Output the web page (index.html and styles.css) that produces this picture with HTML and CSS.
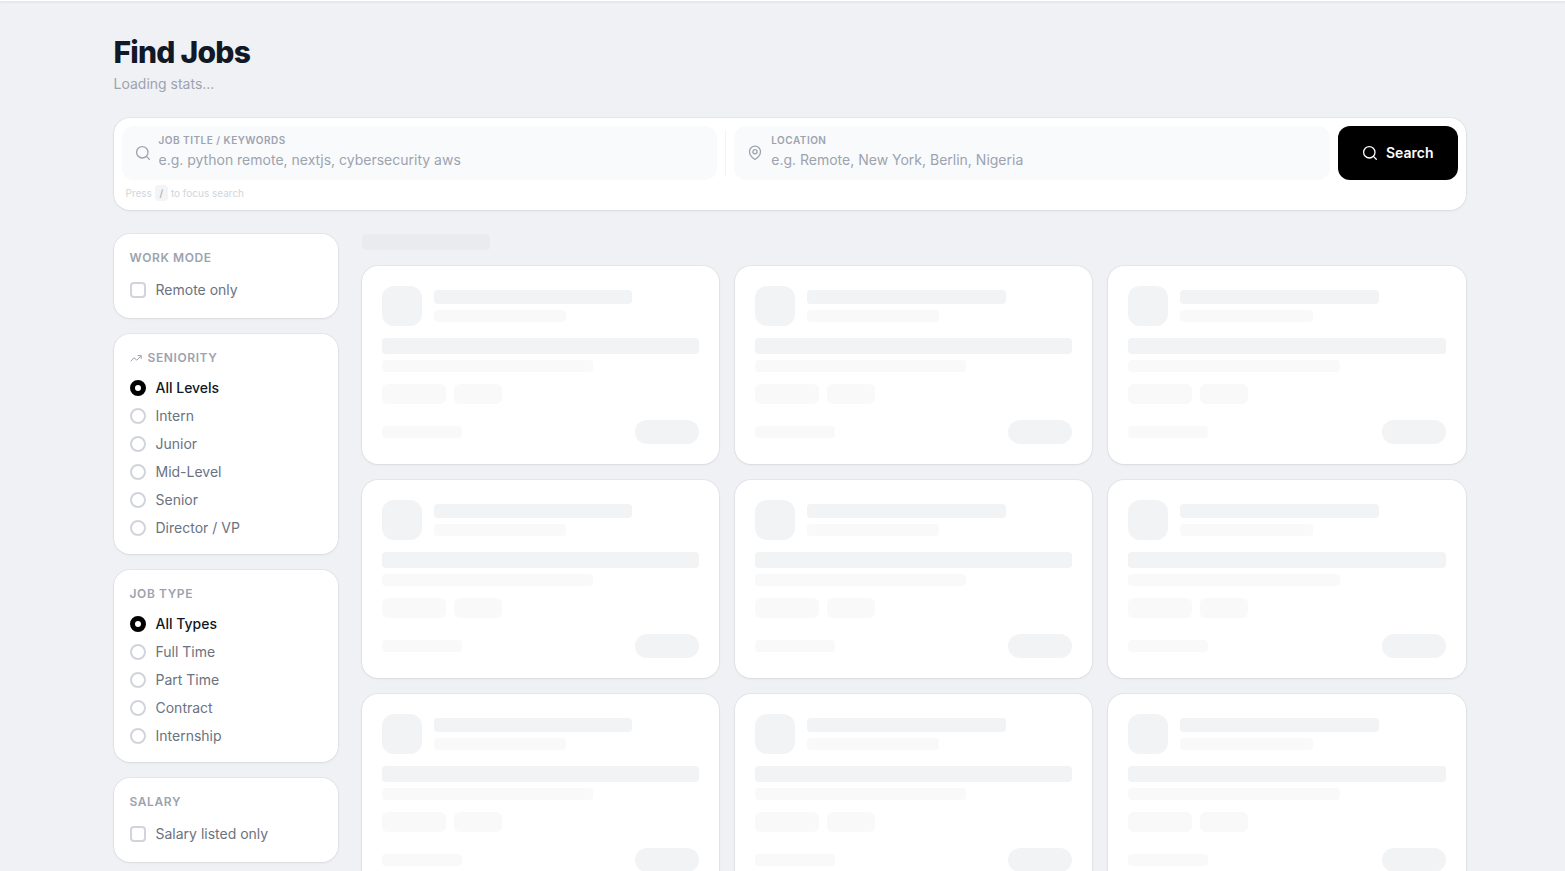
FILE: index.html
```html
<!DOCTYPE html>
<html lang="en">
<head>
  <meta charset="UTF-8" />
  <meta name="viewport" content="width=device-width, initial-scale=1.0"/>
  <title>Find Jobs</title>
  <link rel="stylesheet" href="styles.css">
</head>
<body>

<header class="topbar"></header>

<main class="container">
  <h1>Find Jobs</h1>
  <p class="stats">Loading stats...</p>

  <form class="panel search" onsubmit="return false">
    <div class="search-row">
      <div class="field">
        <svg class="icon" viewBox="0 0 16 16"><circle cx="7.3" cy="7.3" r="5.7"/><path d="M11.4 11.4l2.900 2.900"/></svg>
        <div class="field-body">
          <label for="keywords">Job title / Keywords</label>
          <input id="keywords" type="text" placeholder="e.g. python remote, nextjs, cybersecurity aws">
        </div>
      </div>
      <div class="divider"></div>
      <div class="field">
        <svg class="icon" viewBox="0 0 16 16"><path d="M13.500 6.700c0 4.200-5.500 7.800-5.500 7.800S2.500 10.900 2.500 6.700a5.500 5.500 0 0 1 11 0z"/><circle cx="8" cy="6.700" r="2.100"/></svg>
        <div class="field-body">
          <label for="location">Location</label>
          <input id="location" type="text" placeholder="e.g. Remote, New York, Berlin, Nigeria">
        </div>
      </div>
      <button class="search-btn" type="submit">
        <svg class="icon" viewBox="0 0 16 16"><circle cx="7.3" cy="7.3" r="5.7"/><path d="M11.4 11.4l2.900 2.900"/></svg>
        Search
      </button>
    </div>
    <p class="hint">Press <kbd>/</kbd> to focus search</p>
  </form>

  <div class="layout">
    <aside class="sidebar">
      <section class="panel filter">
        <h2>Work Mode</h2>
        <label class="option check"><input type="checkbox"> Remote only</label>
      </section>

      <section class="panel filter">
        <h2><svg class="icon small" viewBox="0 0 12 12"><path d="M1 9l3-3.200 2.800 2.300L11 4M8 3.600h3.200v3"/></svg>Seniority</h2>
        <label class="option"><input type="radio" name="seniority" checked> <span>All Levels</span></label>
        <label class="option"><input type="radio" name="seniority"> <span>Intern</span></label>
        <label class="option"><input type="radio" name="seniority"> <span>Junior</span></label>
        <label class="option"><input type="radio" name="seniority"> <span>Mid-Level</span></label>
        <label class="option"><input type="radio" name="seniority"> <span>Senior</span></label>
        <label class="option"><input type="radio" name="seniority"> <span>Director / VP</span></label>
      </section>

      <section class="panel filter">
        <h2>Job Type</h2>
        <label class="option"><input type="radio" name="type" checked> <span>All Types</span></label>
        <label class="option"><input type="radio" name="type"> <span>Full Time</span></label>
        <label class="option"><input type="radio" name="type"> <span>Part Time</span></label>
        <label class="option"><input type="radio" name="type"> <span>Contract</span></label>
        <label class="option"><input type="radio" name="type"> <span>Internship</span></label>
      </section>

      <section class="panel filter">
        <h2>Salary</h2>
        <label class="option check"><input type="checkbox"> Salary listed only</label>
      </section>
    </aside>

    <section class="results">
      <div class="bone count"></div>
      <div class="grid" id="grid"></div>
    </section>
  </div>
</main>

<template id="skeleton">
  <article class="panel card">
    <div class="card-head">
      <div class="bone logo"></div>
      <div class="card-lines">
        <div class="bone company"></div>
        <div class="bone light posted"></div>
      </div>
    </div>
    <div class="bone title"></div>
    <div class="bone light subtitle"></div>
    <div class="tags">
      <div class="bone light tag"></div>
      <div class="bone light tag short"></div>
    </div>
    <div class="card-foot">
      <div class="bone light salary"></div>
      <div class="bone apply"></div>
    </div>
  </article>
</template>

<script>
  const grid = document.getElementById('grid');
  const skeleton = document.getElementById('skeleton');

  // placeholders while the jobs load
  for (let i = 0; i < 9; i++) {
    grid.appendChild(skeleton.content.cloneNode(true));
  }

  document.addEventListener('keydown', e => {
    if (e.key === '/' && document.activeElement.type !== 'text') {
      e.preventDefault();
      document.getElementById('keywords').focus();
    }
  });
</script>

</body>
</html>
```
FILE: styles.css
```css
* {
  box-sizing: border-box;
}
html {
  scrollbar-width: none;
}
body {
  font-family: Inter, sans-serif;
  font-size: 14px;
  line-height: 20px;
  background: #f0f1f5;
  color: #111827;
  margin: 0;
  padding-left: 14px;
}
h1, h2, p {
  margin: 0;
}
.topbar {
  height: 2px;
  margin-left: -14px;
  background: white;
  border-bottom: 1px solid #e5e7eb;
  box-shadow: 0 1px 1px rgba(0,0,0,0.04);
}
.container {
  max-width: 1400px;
  margin: 0 auto;
  padding: 32px 24px;
}
h1 {
  font-size: 30px;
  line-height: 36px;
  font-weight: 800;
  letter-spacing: -0.025em;
  margin-bottom: 4px;
}
.stats {
  color: #9ca3af;
  margin-bottom: 24px;
}
.panel {
  background: white;
  border-radius: 16px;
  box-shadow: 0 0 0 1px rgba(0,0,0,0.04), 0 1px 3px rgba(0,0,0,0.06);
}
.icon {
  width: 16px;
  height: 16px;
  flex-shrink: 0;
  fill: none;
  stroke: currentColor;
  stroke-width: 1.3;
  stroke-linecap: round;
  stroke-linejoin: round;
}

/* search */
.search {
  padding: 8px;
  margin-bottom: 24px;
}
.search-row {
  display: flex;
  gap: 8px;
}
.field {
  flex: 1;
  display: flex;
  align-items: center;
  gap: 8px;
  height: 54px;
  padding: 0 13px;
  border-radius: 12px;
  background: #f9fafc;
  color: #9ca3af;
}
.field-body {
  flex: 1;
  padding-bottom: 4px;
}
.field label {
  display: block;
  font-size: 10px;
  line-height: 16px;
  font-weight: 600;
  letter-spacing: 0.05em;
  text-transform: uppercase;
}
.field input {
  display: block;
  width: 100%;
  height: 22px;
  padding: 0;
  border: none;
  outline: none;
  background: transparent;
  font: inherit;
  color: #111827;
}
.field input::placeholder {
  color: #9ca3af;
}
.divider {
  width: 1px;
  margin: 4px 0;
  background: #f3f4f6;
}
.search-btn {
  display: flex;
  align-items: center;
  gap: 8px;
  padding: 0 24px;
  border: none;
  border-radius: 12px;
  background: black;
  color: white;
  font: inherit;
  font-weight: 600;
  cursor: pointer;
}
.hint {
  display: flex;
  align-items: center;
  gap: 3px;
  margin-top: 5px;
  padding: 0 4px 1px;
  font-size: 10px;
  line-height: 16px;
  color: #d1d5db;
}
.hint kbd {
  min-width: 13px;
  border-radius: 4px;
  background: #f3f4f6;
  color: #9ca3af;
  font-family: inherit;
  text-align: center;
}

/* filters */
.layout {
  display: flex;
  align-items: flex-start;
  gap: 24px;
}
.sidebar {
  width: 224px;
  flex-shrink: 0;
  display: flex;
  flex-direction: column;
  gap: 16px;
}
.filter {
  display: flex;
  flex-direction: column;
  gap: 8px;
  padding: 16px;
}
.filter h2 {
  display: flex;
  align-items: center;
  gap: 6px;
  margin-bottom: 4px;
  font-size: 12px;
  line-height: 16px;
  font-weight: 600;
  letter-spacing: 0.05em;
  text-transform: uppercase;
  color: #9ca3af;
}
.icon.small {
  width: 12px;
  height: 12px;
  stroke-width: 1;
}
.option {
  display: flex;
  align-items: center;
  gap: 10px;
  color: #6b7280;
  cursor: pointer;
}
.option.check {
  padding: 2px 0;
}
.option input {
  appearance: none;
  width: 16px;
  height: 16px;
  margin: 0;
  border: 2px solid #d1d5db;
  border-radius: 4px;
}
.option input[type="radio"] {
  border-radius: 50%;
}
.option input:checked {
  border: 5px solid black;
}
.option input:checked + span {
  color: #111827;
  font-weight: 500;
}

/* loading skeletons */
.results {
  flex: 1;
}
.bone {
  border-radius: 4px;
  background: #f2f3f5;
}
.bone.light {
  background: #f9f9fa;
}
.bone.count {
  width: 128px;
  height: 16px;
  margin-bottom: 16px;
  background: #eaebef;
}
.grid {
  display: grid;
  grid-template-columns: repeat(3, 1fr);
  gap: 16px;
}
.card {
  padding: 20px;
}
.card-head {
  display: flex;
  align-items: center;
  gap: 12px;
  margin-bottom: 12px;
}
.logo {
  width: 40px;
  height: 40px;
  border-radius: 12px;
}
.card-lines {
  flex: 1;
}
.company {
  width: 75%;
  height: 14px;
  margin-bottom: 6px;
}
.posted {
  width: 50%;
  height: 12px;
}
.title {
  height: 16px;
  margin-bottom: 6px;
}
.subtitle {
  width: 66.6%;
  height: 12px;
  margin-bottom: 12px;
}
.tags {
  display: flex;
  gap: 8px;
  margin-bottom: 16px;
}
.tag {
  width: 64px;
  height: 20px;
  border-radius: 6px;
}
.tag.short {
  width: 48px;
}
.card-foot {
  display: flex;
  align-items: center;
  justify-content: space-between;
}
.salary {
  width: 80px;
  height: 12px;
}
.apply {
  width: 64px;
  height: 24px;
  border-radius: 12px;
}
```
